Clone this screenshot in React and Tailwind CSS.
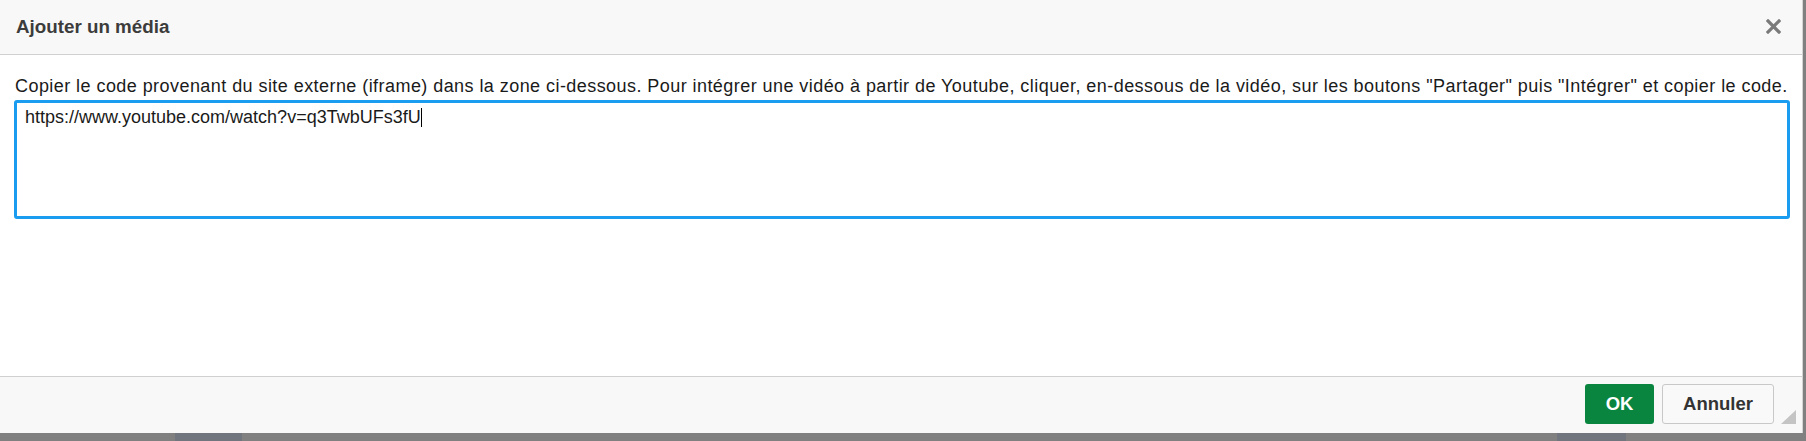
export default function App() {
  const font = { fontFamily: '"Liberation Sans", Arial, sans-serif' };
  return (
    <div className="w-[1806px] h-[441px] bg-[#808080] flex flex-col overflow-hidden" style={font}>
      <div className="flex h-[433px] shrink-0">
        <div className="w-[1803px] h-full bg-white border-r border-[#d4d4d4] flex flex-col">
          {/* header */}
          <div className="h-[55px] shrink-0 bg-[#f8f8f8] border-b border-[#d0d0d0] flex items-center justify-between pl-[16px] pr-[21px]">
            <span className="text-[18.8px] font-bold text-[#3c3c3c] leading-none">Ajouter un média</span>
            <svg width="15" height="15" viewBox="0 0 15 15" className="mt-[-1px]">
              <path d="M2 2 L13 13 M13 2 L2 13" stroke="#7a7a7a" strokeWidth="3.2" strokeLinecap="square" />
            </svg>
          </div>
          {/* body */}
          <div className="flex-1 pt-[21px] pl-[15px] pr-[12px]">
            <p className="text-[18px] tracking-[0.44px] leading-[20px] text-[#1a1a1a] whitespace-nowrap">
              Copier le code provenant du site externe (iframe) dans la zone ci-dessous. Pour intégrer une vidéo à partir de Youtube, cliquer, en-dessous de la vidéo, sur les boutons "Partager" puis "Intégrer" et copier le code.
            </p>
            <div className="mt-[4px] ml-[-1px] w-[1776px] h-[119px] border-[3px] border-[#1a9cf0] rounded-[3px] pl-[8px] pt-[4px] text-[18px] leading-[20px] text-[#1a1a1a]">
              https://www.youtube.com/watch?v=q3TwbUFs3fU<span className="inline-block w-[1px] h-[19px] bg-black align-[-4px]"></span>
            </div>
          </div>
          {/* footer */}
          <div className="h-[57px] shrink-0 bg-[#f8f8f8] border-t border-[#d0d0d0] flex items-start justify-end pt-[7px] pr-[28px] gap-[8px] relative">
            <button className="w-[69px] h-[40px] rounded-[3px] bg-[#0a8540] text-white font-bold text-[18.5px]">OK</button>
            <button className="w-[112px] h-[40px] rounded-[3px] bg-[#f9f9f9] border border-[#c8c8c8] text-[#333] font-bold text-[18.5px]">Annuler</button>
            <svg width="15" height="14" viewBox="0 0 15 14" className="absolute right-[6px] bottom-[9px]">
              <polygon points="15,0 15,14 0,14" fill="#c4c4c4" />
            </svg>
          </div>
        </div>
        <div className="flex-1 bg-[#808080]"></div>
      </div>
      <div className="h-[8px] flex">
        <div className="w-[175px]"></div>
        <div className="w-[67px] bg-[#70757e]"></div>
        <div className="w-[1315px]"></div>
        <div className="w-[69px] bg-[#70757e]"></div>
      </div>
    </div>
  );
}
